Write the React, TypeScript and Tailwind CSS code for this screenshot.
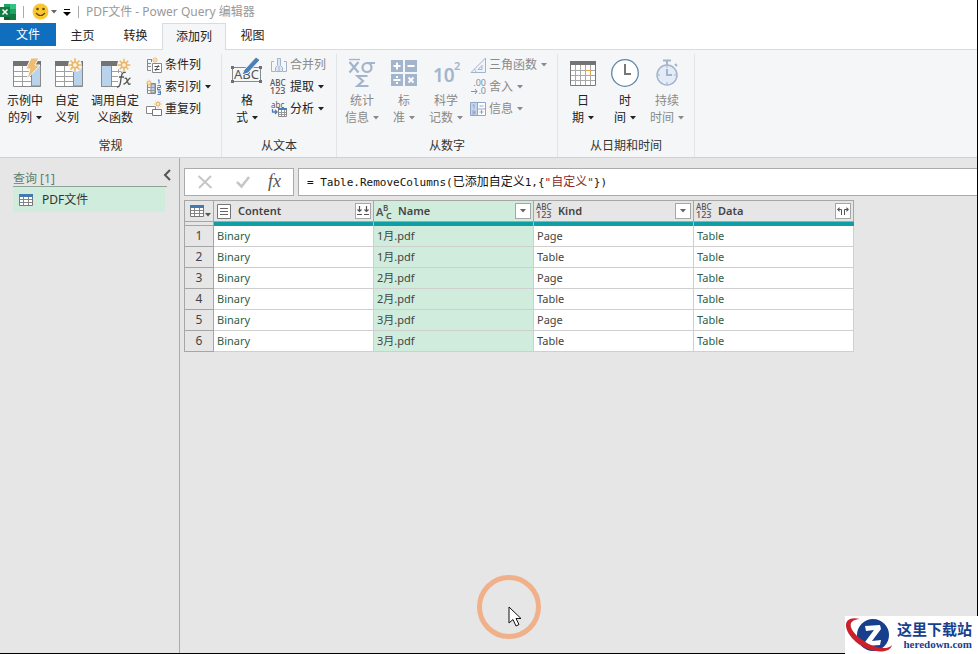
import type { ReactNode } from 'react'

interface ToolProps {
  icon: ReactNode
  label: string
  menu?: boolean
  disabled?: boolean
}

interface BigToolProps extends Omit<ToolProps, 'label'> {
  top: string
  bottom: string
  width?: string
}

const rows = [
  { name: '1月.pdf', kind: 'Page' },
  { name: '1月.pdf', kind: 'Table' },
  { name: '2月.pdf', kind: 'Page' },
  { name: '2月.pdf', kind: 'Table' },
  { name: '3月.pdf', kind: 'Page' },
  { name: '3月.pdf', kind: 'Table' },
]

function Caret() {
  return (
    <svg className="shrink-0" width="6" height="4" viewBox="0 0 6 4" aria-hidden="true">
      <path d="M0 0h6L3 3.5z" fill="currentColor" />
    </svg>
  )
}

function Spark({ x, y, s = 1 }: { x: number; y: number; s?: number }) {
  return (
    <g transform={`translate(${x} ${y}) scale(${s})`}>
      <path
        d="M0-7.5V7.5M-7.5 0H7.5M-5-5 5 5M-5 5 5-5"
        stroke="#ebb767"
        strokeWidth="1.8"
      />
      <circle r="4" fill="#ebb767" />
      <circle r="2.2" fill="#fff4dd" />
    </g>
  )
}

function SheetBase() {
  return (
    <>
      <path d="M1.5 5.500h27v23h-27z" fill="#fff" stroke="#8a8a8a" />
      <path d="M19.500 6h9v22h-9z" fill="#b9d3ec" stroke="#8a8a8a" />
      <path d="M1 3h28v5H1z" fill="#737373" />
      <path d="M10.500 8v20M2 13.500h17M2 18.500h17M2 23.500h17" stroke="#a0a0a0" />
    </>
  )
}

function SampleColumnIcon() {
  return (
    <svg width="32" height="30" viewBox="-3 0 32 30">
      <SheetBase />
      <path d="M19 0h8l-4 7h5L15 21l3-10h-4z" fill="#efbd72" stroke="#f5f6f7" />
    </svg>
  )
}

function CustomColumnIcon() {
  return (
    <svg width="32" height="30" viewBox="-3 0 32 30">
      <SheetBase />
      <circle cx="21" cy="7" r="7" fill="#f5f6f7" />
      <Spark x={21} y={7} s={0.9} />
    </svg>
  )
}

function InvokeFunctionIcon() {
  return (
    <svg width="32" height="30" viewBox="-1 0 32 30">
      <path d="M1.500 5.500h20v23h-20z" fill="#fff" stroke="#8a8a8a" />
      <path d="M1.500 6h10v22.500h-10z" fill="#b9d3ec" stroke="#8a8a8a" />
      <path d="M1 3h19v5H1z" fill="#737373" />
      <path d="M12 13.500h14M12 18.500h8M12 23.500h6M18.500 8v15M25.500 12v4" stroke="#a0a0a0" />
      <circle cx="24" cy="7" r="7" fill="#f5f6f7" />
      <Spark x={24} y={7} s={0.85} />
      <path d="M18 15h13v15H18z" fill="#f5f6f7" />
      <path
        d="M25.500 14.500c-3-1-4 2-4.500 6-.5 5-1 9-4 8.500M19 19h5M24.500 20.500c2-1 2 0 3 3s1.500 3.500 3 2M30.500 20c-2 0-4 6-7 6"
        fill="none"
        stroke="#555"
        strokeWidth="1.300"
      />
    </svg>
  )
}

function FormatIcon() {
  return (
    <svg className="overflow-visible" width="32" height="30" viewBox="0 0 32 30">
      <path d="M1.500 9.500h28v14h-28z" fill="none" stroke="#8a8a8a" />
      <path d="M0 8h3v3H0zM28 8h3v3h-3zM0 22h3v3H0zM28 22h3v3h-3z" fill="#707070" />
      <text x="3" y="21" fontSize="13" fontFamily="Noto Sans" fill="#555">
        ABC
      </text>
      <path d="m11 17 2-5L25-1l4 3-12 13z" fill="#4e7fb5" stroke="#f5f6f7" />
    </svg>
  )
}

function StatisticsIcon() {
  return (
    <svg width="32" height="30" viewBox="0 0 32 30" fill="none" stroke="#a3b4cd" strokeWidth="2.200">
      <path d="M3 1.500h11" strokeWidth="1.300" />
      <path d="m3.500 4 9 10.500M12.500 4l-9 10.500" />
      <circle cx="21" cy="9.500" r="4.500" />
      <path d="M21 5h8M21.500 18h-10l5.500 5-5.500 5h11" />
    </svg>
  )
}

function StandardIcon() {
  return (
    <svg width="32" height="30" viewBox="0 0 32 30">
      <path d="M3 2h12v12H3zM17 2h12v12H17zM3 16h12v12H3zM17 16h12v12H17z" fill="#a3b4cd" />
      <path
        d="M5.500 8h7M9 4.500v7M19.500 8h7M5.500 22h7M20.500 19.500l5 5M25.500 19.500l-5 5"
        stroke="#fff"
        strokeWidth="2"
      />
      <path d="M8 18h2v2H8zM8 24h2v2H8z" fill="#fff" />
    </svg>
  )
}

function ScientificIcon() {
  return (
    <svg className="overflow-visible" width="32" height="30" viewBox="0 0 32 30" fill="#a3b4cd" fontFamily="Noto Sans" fontWeight="600">
      <text x="3" y="24" fontSize="19">10</text>
      <text x="24" y="12" fontSize="11">2</text>
    </svg>
  )
}

function CalendarIcon() {
  return (
    <svg width="32" height="30" viewBox="0 0 32 30">
      <path d="M3.500 4.500h25v23h-25z" fill="#fff" stroke="#777" />
      <path d="M3 3h26v4H3z" fill="#737373" />
      <path d="M8.500 7v20M13.500 7v20M18.500 7v20M23.500 7v20M4 12.500h24M4 17.500h24M4 22.500h24" stroke="#a8a8a8" />
      <path d="M18.500 12.500h5v5h-5z" fill="#fff" stroke="#e3a345" />
    </svg>
  )
}

function ClockIcon() {
  return (
    <svg width="32" height="30" viewBox="0 0 32 30" fill="none">
      <circle cx="16" cy="15" r="13.300" fill="#fff" stroke="#5d86a9" strokeWidth="1.300" />
      <path d="M16 6v10h6" stroke="#777" strokeWidth="2" />
    </svg>
  )
}

function StopwatchIcon() {
  return (
    <svg width="32" height="30" viewBox="0 0 32 30" fill="none" stroke="#a3b4cd">
      <circle cx="16" cy="17" r="10" fill="#e3ebf7" strokeWidth="1.500" />
      <path d="M16 11v6h5M12 2.500h8M16 3v4M24 6l2 2" strokeWidth="2" />
      <path d="M16 8v2M16 24v2M7 17h2M23 17h2" />
    </svg>
  )
}

function ConditionalIcon() {
  return (
    <svg width="16" height="16" viewBox="0 0 16 16" fill="none">
      <path d="M5 2.500H1.500v11H5M2 6.500h3M2 9.500h3M5.500 2v3" stroke="#888" />
      <Spark x={9} y={3} s={0.4} />
      <path d="M6.500 6.500h9v9h-9z" fill="#fff" stroke="#888" />
      <path d="M8.500 9.500h5M8.500 12.500h5M12.500 8l-3 6" stroke="#555" />
    </svg>
  )
}

function IndexIcon() {
  return (
    <svg width="16" height="16" viewBox="0 0 16 16" fill="none">
      <path d="M1.500 4.500h8v10h-8z" stroke="#888" />
      <path d="M5 5h4v9H5z" fill="#b9d3ec" stroke="#888" />
      <path d="M2 8.500h7M2 11.500h7" stroke="#999" />
      <Spark x={3} y={4} s={0.45} />
      <path
        d="m12 1.500 1-.8v4M11.500 6.500h3v2h-3v2h3M11.500 12h3v3.500h-3M12 13.700h2.500"
        stroke="#4f7db0"
      />
    </svg>
  )
}

function DuplicateIcon() {
  return (
    <svg width="16" height="16" viewBox="0 0 16 16" fill="none">
      <path d="M.5 5.500h9v7h-9z" fill="#fff" stroke="#888" />
      <path d="M6.500 8.500h9v6h-9z" fill="#fff" stroke="#777" />
      <Spark x={12} y={3} s={0.5} />
    </svg>
  )
}

function MergeIcon() {
  return (
    <svg width="16" height="16" viewBox="0 0 16 16" fill="none" stroke="#a3b4cd">
      <path d="M3 4.500H.5v10H4M13 4.500h2.500v10H12" />
      <path d="M6.500 1.500h3v7l2 2v4h-7v-4l2-2z" fill="#dce6f4" />
      <path d="M8 9v5" />
    </svg>
  )
}

function AnyTypeIcon() {
  return (
    <span className="-ml-px flex w-[18px] flex-col text-left text-[9px] leading-2 font-medium text-[#555]">
      <span className="text-[8px]">ABC</span>
      <span>123</span>
    </span>
  )
}

function ParseIcon() {
  return (
    <svg className="overflow-visible" width="17" height="16" viewBox="0 0 17 16" fill="none">
      <text x="0" y="7" fontSize="8" fontFamily="Noto Sans" fill="#555">abc</text>
      <path d="M1.500 8v3h4M4 9l2 2-2 2" stroke="#4f7db0" strokeWidth="1.300" />
      <path d="M7.500 7.500h8v8h-8z" fill="#fff" stroke="#888" />
      <path d="M7 7h9v2H7z" fill="#4f7db0" />
      <path d="M10.500 9v6M13.500 9v6M8 11.500h7M8 13.500h7" stroke="#999" />
    </svg>
  )
}

function TrigonometryIcon() {
  return (
    <svg width="16" height="16" viewBox="0 0 16 16" fill="none" stroke="#a3b4cd">
      <path d="M1 15.500 15.500 1v14.500z" fill="#f0f4fa" />
      <path d="M8 12.500h4v-4zM4 12q2 1 2 3" />
    </svg>
  )
}

function RoundingIcon() {
  return (
    <span className="flex w-4 flex-col text-right text-[9px] leading-2 text-[#8091ac]">
      <span>.00</span>
      <span className="flex items-center justify-end">
        <svg width="7" height="6" viewBox="0 0 7 6" fill="none" stroke="currentColor">
          <path d="M0 3.500h6M4 1l2 2.500L4 6" />
        </svg>
        .0
      </span>
    </span>
  )
}

function InformationIcon() {
  return (
    <svg width="16" height="16" viewBox="0 0 16 16" fill="none" stroke="#8fa6c6">
      <path d="M.5 1.500h15v13H.5z" fill="#fff" />
      <path d="M1 2h6v12H1z" fill="#c5d5eb" stroke="none" />
      <path d="M7.500 2v12M8 8h7.500M9.500 5h4M9.500 11h4M11.500 9v4M2.500 4.500 4 3.500v4M2 10h3v3H2M2.500 11.500H5" />
    </svg>
  )
}

function TableGlyph() {
  return (
    <svg className="shrink-0" width="14" height="12" viewBox="0 0 14 12">
      <path d="M.5.5h13v11H.5z" fill="#fff" stroke="#777" />
      <path d="M0 0h14v3H0z" fill="#4378b0" />
      <path d="M4.500 3v8M9.500 3v8M1 5.500h12M1 8.500h12" stroke="#858585" />
    </svg>
  )
}

function BigTool({ icon, top, bottom, menu, disabled, width = 'w-[42px]' }: BigToolProps) {
  return (
    <button
      disabled={disabled}
      className={`flex flex-col items-center pt-1 leading-[17px] text-[#222] disabled:text-[#8a8a8a] ${width}`}
    >
      {icon}
      <span className="mt-1 whitespace-nowrap">{top}</span>
      <span className="flex items-center gap-1 whitespace-nowrap">
        {bottom}
        {menu && <Caret />}
      </span>
    </button>
  )
}

function SmallTool({ icon, label, menu, disabled }: ToolProps) {
  return (
    <button
      disabled={disabled}
      className="flex h-[22px] items-center whitespace-nowrap text-[#222] disabled:text-[#8a8a8a]"
    >
      <span className="w-[19px]">{icon}</span>
      <span className="mr-1">{label}</span>
      {menu && <Caret />}
    </button>
  )
}

function Group({ title, width, children }: { title: string; width: string; children: ReactNode }) {
  return (
    <section className={`flex shrink-0 flex-col border-r border-[#e3e4e6] ${width}`}>
      <div className="flex h-[82px] items-start pl-1">{children}</div>
      <h2 className="text-center leading-5 text-[#333]">{title}</h2>
    </section>
  )
}

function TextTypeIcon() {
  return (
    <svg className="-ml-px shrink-0 overflow-visible" width="18" height="18" viewBox="0 0 18 18" fill="#555" fontFamily="Noto Sans" fontWeight="600">
      <text x="0" y="14" fontSize="11">A</text>
      <text x="7" y="9" fontSize="8">B</text>
      <text x="10" y="17" fontSize="9">C</text>
    </svg>
  )
}

function BinaryTypeIcon() {
  return (
    <svg className="shrink-0" width="14" height="15" viewBox="0 0 14 15" fill="none">
      <path d="M.5.5h13v14H.5z" fill="#fff" stroke="#777" />
      <path d="M3 4.500h8M3 7.500h8M3 10.500h8" stroke="#666" />
    </svg>
  )
}

function ColumnHead({ icon, label, action, selected }: { icon: ReactNode; label: string; action: ReactNode; selected?: boolean }) {
  return (
    <th
      scope="col"
      className={`h-[22px] border-y border-r border-[#a6a6a6] p-0 ${selected ? 'bg-[#d0ecdd]' : ''}`}
    >
      <div className="flex h-5 items-center pr-0.5 pl-[3px]">
        <span className="w-[21px]">{icon}</span>
        <span className="flex-1 text-left font-semibold text-[#444]">{label}</span>
        <button
          aria-label={`${label} options`}
          className="flex size-4 items-center justify-center border border-[#a6a6a6] bg-white text-[#666]"
        >
          {action}
        </button>
      </div>
    </th>
  )
}

function CombineGlyph() {
  return (
    <svg className="shrink-0" width="14" height="12" viewBox="0 0 14 12" fill="none" stroke="#555">
      <path d="M3.500 1v6M1.500 4.500l2 2 2-2M10.500 1v6M8.500 4.500l2 2 2-2M1 9.500h5M8 9.500h5" strokeWidth="1.200" />
    </svg>
  )
}

function ExpandGlyph() {
  return (
    <svg className="shrink-0" width="14" height="12" viewBox="0 0 14 12" fill="none" stroke="#555">
      <path d="M5.500 10V4.500H2M8.500 10V4.500H12" />
      <path d="M3.500 2v5L1 4.500zM10.500 2v5L13 4.500z" fill="#555" stroke="none" />
    </svg>
  )
}

function TitleBar() {
  return (
    <header className="flex h-[23px] items-center bg-white text-[#999]">
      <svg width="16" height="16" viewBox="0 0 16 16">
        <path d="M4 0h12v16H4z" fill="#21a366" />
        <path d="M10 0h6v5h-6z" fill="#33c481" />
        <path d="M4 5h6v11H4z" fill="#185c37" />
        <path d="M10 10h6v6h-6z" fill="#107c41" />
        <path d="M0 3h10v10H0z" fill="#107c41" />
        <path d="m2.500 5.500 5 5M7.500 5.500l-5 5" stroke="#fff" strokeWidth="1.500" />
      </svg>
      <span className="mr-2 ml-[7px] h-3 w-px bg-[#aaa]" />
      <button aria-label="Feedback" className="flex items-center gap-0.5 text-[#666]">
        <svg width="17" height="17" viewBox="0 0 17 17">
          <circle cx="8.500" cy="8.500" r="8" fill="#fbc62f" />
          <circle cx="5.500" cy="6" r="1.300" fill="#5a4a20" />
          <circle cx="11.500" cy="6" r="1.300" fill="#5a4a20" />
          <path d="M4 10q4.500 5 9 0" fill="none" stroke="#5a4a20" strokeWidth="1.200" />
        </svg>
        <Caret />
      </button>
      <button aria-label="Customize toolbar" className="ml-1.5 pt-0.5 text-black">
        <svg width="8" height="7" viewBox="0 0 8 7">
          <path d="M1 0h6v1H1zM0 3h8L4 7z" fill="currentColor" />
        </svg>
      </button>
      <span className="mx-[7px] h-3 w-px bg-[#aaa]" />
      <h1>PDF文件 - Power Query 编辑器</h1>
    </header>
  )
}

function Tabs() {
  return (
    <nav className="flex h-[27px] border-b border-[#dadbdc] bg-white text-[#222]">
      <button className="h-[23px] w-14 bg-[#106ebe] text-white">文件</button>
      <button className="w-[53px]">主页</button>
      <button className="w-[53px]">转换</button>
      <button className="-mb-px w-16 border border-b-0 border-[#dadbdc] bg-[#f5f6f7]">添加列</button>
      <button className="w-[53px]">视图</button>
    </nav>
  )
}

function Ribbon() {
  return (
    <div className="flex h-[108px] overflow-hidden border-b border-[#cfd0d2] bg-[#f5f6f7] pt-1">
      <Group title="常规" width="w-[222px]">
        <BigTool icon={<SampleColumnIcon />} top="示例中" bottom="的列" menu />
        <BigTool icon={<CustomColumnIcon />} top="自定" bottom="义列" />
        <BigTool icon={<InvokeFunctionIcon />} top="调用自定" bottom="义函数" width="w-[54px]" />
        <div className="ml-1">
          <SmallTool icon={<ConditionalIcon />} label="条件列" />
          <SmallTool icon={<IndexIcon />} label="索引列" menu />
          <SmallTool icon={<DuplicateIcon />} label="重复列" />
        </div>
      </Group>
      <Group title="从文本" width="w-[115px]">
        <BigTool icon={<FormatIcon />} top="格" bottom="式" menu />
        <div className="ml-[3px]">
          <SmallTool icon={<MergeIcon />} label="合并列" disabled />
          <SmallTool icon={<AnyTypeIcon />} label="提取" menu />
          <SmallTool icon={<ParseIcon />} label="分析" menu />
        </div>
      </Group>
      <Group title="从数字" width="w-[221px]">
        <BigTool icon={<StatisticsIcon />} top="统计" bottom="信息" menu disabled />
        <BigTool icon={<StandardIcon />} top="标" bottom="准" menu disabled />
        <BigTool icon={<ScientificIcon />} top="科学" bottom="记数" menu disabled />
        <div className="ml-[3px]">
          <SmallTool icon={<TrigonometryIcon />} label="三角函数" menu disabled />
          <SmallTool icon={<RoundingIcon />} label="舍入" menu disabled />
          <SmallTool icon={<InformationIcon />} label="信息" menu disabled />
        </div>
      </Group>
      <Group title="从日期和时间" width="w-[137px]">
        <BigTool icon={<CalendarIcon />} top="日" bottom="期" menu />
        <BigTool icon={<ClockIcon />} top="时" bottom="间" menu />
        <BigTool icon={<StopwatchIcon />} top="持续" bottom="时间" menu disabled />
      </Group>
    </div>
  )
}

function QueryPane() {
  return (
    <aside className="w-[180px] shrink-0 border-r border-[#ababab] pt-[11px] pr-2 pl-[13px]">
      <div className="flex h-[18px]">
        <h2 className="flex-1 self-end border-b border-[#8fa398] leading-[14px] text-[#5c7f6d]">查询 [1]</h2>
        <button aria-label="Collapse queries" className="-ml-1 self-start">
          <svg width="8" height="12" viewBox="0 0 8 12">
            <path d="M7 1 2 6l5 5" fill="none" stroke="#555" strokeWidth="2" />
          </svg>
        </button>
      </div>
      <button className="flex h-[25px] w-[152px] items-center gap-[9px] bg-[#d0ecdd] pl-1.5 text-[#333]">
        <TableGlyph />
        PDF文件
      </button>
    </aside>
  )
}

function FormulaBar() {
  return (
    <div className="flex h-7 gap-1">
      <div className="flex w-[110px] items-center justify-between border border-[#ababab] bg-white px-3">
        <button aria-label="Cancel">
          <svg width="16" height="14" viewBox="0 0 16 14">
            <path d="m1.500 1 13 12M14 1 2 13" stroke="#c6c6c6" strokeWidth="2" />
          </svg>
        </button>
        <button aria-label="Commit" className="pl-1">
          <svg width="16" height="14" viewBox="0 0 16 14">
            <path d="m2 7 4.500 4.500L14 2" fill="none" stroke="#c6c6c6" strokeWidth="2.500" />
          </svg>
        </button>
        <button
          aria-label="Insert step"
          className="pb-0.5 font-['Liberation_Serif',serif] text-lg leading-5 text-[#555] italic"
        >
          fx
        </button>
      </div>
      <div className="flex flex-1 items-center border border-r-0 border-[#ababab] bg-white pl-2 font-['DejaVu_Sans_Mono','Noto_Sans_CJK_SC',monospace] text-[11px] whitespace-pre text-[#111]">
        <code className="font-[inherit]">
          = Table.RemoveColumns(<span className="text-xs">已添加自定义</span>1,{'{'}
          <span className="text-[#8b2a2a]">
            "<span className="text-xs">自定义</span>"
          </span>
          {'})'}
        </code>
      </div>
    </div>
  )
}

function DataGrid() {
  return (
    <table className="mt-1 w-[670px] table-fixed border-separate border-spacing-0 text-[11px] leading-4">
      <colgroup>
        <col className="w-[30px]" />
        <col className="w-40" />
        <col className="w-40" />
        <col className="w-40" />
        <col className="w-40" />
      </colgroup>
      <thead>
        <tr>
          <td className="border border-[#a6a6a6] p-0">
            <button aria-label="Table options" className="flex items-end gap-px pl-[5px] text-[#555]">
              <TableGlyph />
              <Caret />
            </button>
          </td>
          <ColumnHead icon={<BinaryTypeIcon />} label="Content" action={<CombineGlyph />} />
          <ColumnHead icon={<TextTypeIcon />} label="Name" action={<Caret />} selected />
          <ColumnHead icon={<AnyTypeIcon />} label="Kind" action={<Caret />} />
          <ColumnHead icon={<AnyTypeIcon />} label="Data" action={<ExpandGlyph />} />
        </tr>
        <tr className="h-1">
          <td className="border-x border-b border-[#a6a6a6] p-0" />
          <td className="border-r border-[#8fcccc] bg-[#0f9ea3] p-0" />
          <td className="border-r border-[#8fcccc] bg-[#0f9ea3] p-0" />
          <td className="border-r border-[#8fcccc] bg-[#0f9ea3] p-0" />
          <td className="bg-[#0f9ea3] p-0" />
        </tr>
      </thead>
      <tbody>
        {rows.map((row, i) => (
          <tr key={i} className="h-[21px] bg-white text-[#444]">
            <th
              scope="row"
              className="border-x border-b border-[#a6a6a6] bg-[#e6e6e6] p-0 text-xs leading-4 font-normal"
            >
              {i + 1}
            </th>
            <td className="border-r border-b border-[#cfcfcf] p-0 pl-[3px] text-[#2c6148]">Binary</td>
            <td className="border-r border-b border-[#cfcfcf] bg-[#d0ecdd] p-0 pl-[3px]">{row.name}</td>
            <td className="border-r border-b border-[#cfcfcf] p-0 pl-[3px]">{row.kind}</td>
            <td className="border-r border-b border-[#cfcfcf] p-0 pl-[3px] text-[#2c6148]">Table</td>
          </tr>
        ))}
      </tbody>
    </table>
  )
}

function Pointer() {
  return (
    <div className="pointer-events-none absolute top-[575px] left-[477px] size-16 rounded-full border-[5px] border-[#f0b08a]">
      <svg className="absolute top-[26px] left-[26px]" width="14" height="21" viewBox="0 0 14 21">
        <path d="M1 1v16l4-3.500 3 6.500 3-1.500-3-6h5z" fill="#fff" stroke="#111" />
      </svg>
    </div>
  )
}

function Watermark() {
  return (
    <a
      href="#heredown"
      className="absolute -right-px -bottom-px flex h-[38px] w-[133px] items-center gap-1 bg-white text-[#163f8f]"
    >
      <svg className="shrink-0" width="48" height="38" viewBox="0 0 48 38">
        <circle cx="28" cy="19" r="16" fill="#173f8c" />
        <path d="m20 10 15-1 1 4-9 12 9-1-1 5-14 1-1-4 9-12-8 1z" fill="#fff" />
        <path d="M15 3C-4-1-2 15 11 26s34 13 36 3c-5 6-19 3-31-6S1 4 15 3z" fill="#c9202b" />
      </svg>
      <span className="flex flex-col items-end">
        <span className="text-[15px] leading-[18px] font-bold">这里下载站</span>
        <span className="font-['Liberation_Serif',serif] text-[11px] leading-3 font-bold">heredown.com</span>
      </span>
    </a>
  )
}

export default function App() {
  return (
    <div className="relative flex min-h-screen flex-col border-r border-b border-black bg-[#e6e6e6] font-['Noto_Sans','Noto_Sans_CJK_SC',sans-serif] text-xs">
      <TitleBar />
      <Tabs />
      <Ribbon />
      <div className="flex flex-1">
        <QueryPane />
        <main className="min-w-0 flex-1 pt-[10px] pl-1">
          <FormulaBar />
          <DataGrid />
        </main>
      </div>
      <Pointer />
      <Watermark />
    </div>
  )
}
